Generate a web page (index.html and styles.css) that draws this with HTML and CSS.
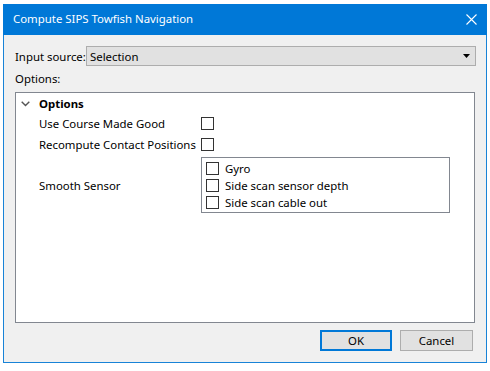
FILE: index.html
```html
<!DOCTYPE html>
<html>
<head>
<meta charset="utf-8">
<link rel="stylesheet" href="styles.css">
</head>
<body>
<div class="window">
  <div class="titlebar">
    <span class="title">Compute SIPS Towfish Navigation</span>
    <svg class="close" width="11" height="11" viewBox="0 0 11 11"><path d="M0.5 0.5 L10.5 10.5 M10.5 0.5 L0.5 10.5" stroke="#fff" stroke-width="1.1" fill="none"/></svg>
  </div>
  <div class="content">
    <div class="source-row">
      <span class="label">Input source:</span>
      <div class="combo">
        <span>Selection</span>
        <svg class="arrow" width="7" height="4" viewBox="0 0 7 4"><path d="M0 0 H7 L3.5 4 Z" fill="#000"/></svg>
      </div>
    </div>
    <div class="options-label">Options:</div>
    <div class="panel">
      <div class="group-head">
        <svg class="chev" width="9" height="6" viewBox="0 0 9 6"><path d="M0.7 0.7 L4.5 4.5 L8.3 0.7" stroke="#555" stroke-width="1.4" fill="none"/></svg>
        <span class="group-title">Options</span>
      </div>
      <div class="prop">
        <span class="pname">Use Course Made Good</span>
        <span class="cb"></span>
      </div>
      <div class="prop">
        <span class="pname">Recompute Contact Positions</span>
        <span class="cb"></span>
      </div>
      <div class="prop sensor">
        <span class="pname">Smooth Sensor</span>
        <div class="list">
          <div class="item"><span class="cb"></span><span>Gyro</span></div>
          <div class="item"><span class="cb"></span><span>Side scan sensor depth</span></div>
          <div class="item"><span class="cb"></span><span>Side scan cable out</span></div>
        </div>
      </div>
    </div>
    <div class="buttons">
      <div class="btn default">OK</div>
      <div class="btn">Cancel</div>
    </div>
  </div>
</div>
</body>
</html>
```
FILE: styles.css
```css
html, body {
  margin: 0;
  padding: 0;
  background: #ffffff;
}
body {
  font-family: "Noto Sans", "Open Sans", sans-serif;
  font-size: 11.4px;
  color: #000;
  white-space: nowrap;
}
.window {
  margin: 4px 0 0 3px;
  width: 484px;
  height: 359px;
  box-sizing: border-box;
  border: 1px solid #1883d7;
  border-top: none;
  background: #f0f0f0;
  display: flex;
  flex-direction: column;
}
.titlebar {
  height: 31px;
  flex: none;
  margin: 0 -1px;
  background: #0078d7;
  color: #fff;
  display: flex;
  align-items: center;
  justify-content: space-between;
  padding: 0 10px 0 10px;
  box-sizing: border-box;
}
.title {
  line-height: 16px;
  padding-bottom: 1px;
}
.close {
  display: block;
  margin-top: -1px;
}
.content {
  flex: 1;
  display: flex;
  flex-direction: column;
  padding: 11px 11px 0 11px;
}
.source-row {
  display: flex;
  align-items: center;
  height: 20px;
  flex: none;
}
.label {
  flex: none;
  width: 71px;
}
.combo {
  flex: 1;
  height: 20px;
  box-sizing: border-box;
  border: 1px solid #adadad;
  background: #e1e1e1;
  display: flex;
  align-items: center;
  justify-content: space-between;
  padding: 0 5px 0 3px;
  margin-right: -1px;
}
.arrow { display: block; }
.options-label {
  margin-top: 5px;
  height: 16px;
  line-height: 16px;
  flex: none;
}
.panel {
  margin-top: 5px;
  height: 231px;
  flex: none;
  box-sizing: border-box;
  border: 1px solid #828790;
  background: #fff;
  padding: 2px 0 0 0;
}
.group-head {
  display: flex;
  align-items: center;
  height: 17px;
  margin-bottom: 1px;
}
.chev {
  display: block;
  margin-left: 5px;
  margin-right: 9px;
}
.group-title {
  font-weight: bold;
}
.prop {
  display: flex;
  align-items: center;
  height: 21px;
  padding-left: 23px;
}
.pname {
  flex: none;
  width: 162px;
}
.cb {
  display: block;
  flex: none;
  width: 13px;
  height: 13px;
  box-sizing: border-box;
  border: 1px solid #333;
  background: #fff;
}
.prop.sensor {
  height: 56px;
  margin-top: 2px;
}
.list {
  width: 249px;
  height: 56px;
  box-sizing: border-box;
  border: 1px solid #828790;
  padding: 2px 0 0 4px;
}
.item {
  display: flex;
  align-items: center;
  height: 17px;
}
.item .cb {
  margin-right: 6px;
}
.buttons {
  display: flex;
  justify-content: flex-end;
  gap: 8px;
  margin-top: 7px;
  margin-right: 2px;
  flex: none;
}
.btn {
  width: 73px;
  height: 21px;
  box-sizing: border-box;
  border: 1px solid #adadad;
  background: #e1e1e1;
  display: flex;
  align-items: center;
  justify-content: center;
}
.btn.default {
  width: 72px;
  border: 2px solid #0078d7;
}
```
